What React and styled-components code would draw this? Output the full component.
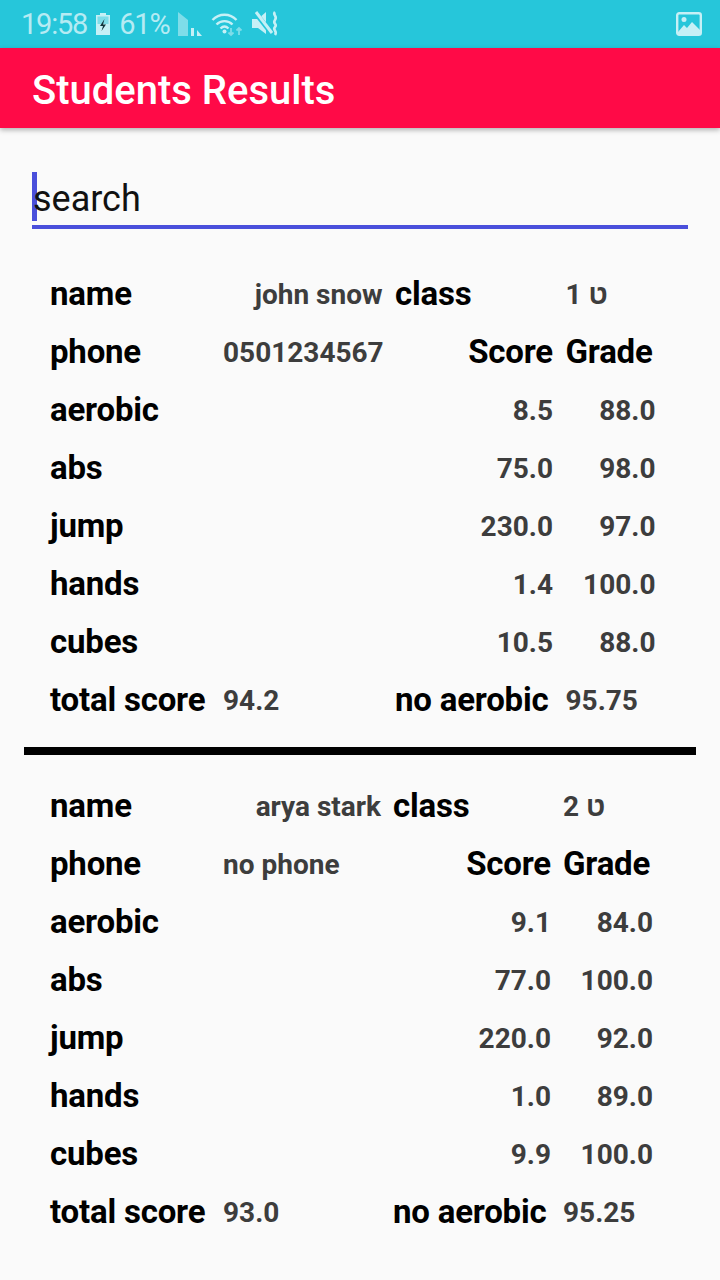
import React from 'react';
import styled, { createGlobalStyle } from 'styled-components';

const GlobalStyle = createGlobalStyle`
	html, body {
		margin: 0;
		padding: 0;
		background: #fafafa;
		font-family: Roboto, 'Liberation Sans', sans-serif;
	}
	* {
		box-sizing: border-box;
	}
`;

const STUDENTS = [
	{
		name: 'john snow',
		className: '1 ט',
		phone: '0501234567',
		total: '94.2',
		noAerobic: '95.75',
		columns: '160.5px 159.5px 158px 90px',
		columnGap: '12.5px',
		scores: [
			['aerobic', '8.5', '88.0'],
			['abs', '75.0', '98.0'],
			['jump', '230.0', '97.0'],
			['hands', '1.4', '100.0'],
			['cubes', '10.5', '88.0'],
		],
	},
	{
		name: 'arya stark',
		className: '2 ט',
		phone: 'no phone',
		total: '93.0',
		noAerobic: '95.25',
		columns: '161px 158px 158px 90px',
		columnGap: '12px',
		scores: [
			['aerobic', '9.1', '84.0'],
			['abs', '77.0', '100.0'],
			['jump', '220.0', '92.0'],
			['hands', '1.0', '89.0'],
			['cubes', '9.9', '100.0'],
		],
	},
];

const App = () => {
	return (
		<Screen>
			<GlobalStyle />
			<StatusBar>
				<StatusLeft>
					<StatusText>19:58</StatusText>
					<BatteryIcon />
					<StatusText>61%</StatusText>
					<SignalIcon />
					<WifiIcon />
					<MuteIcon />
				</StatusLeft>
				<PictureIcon />
			</StatusBar>
			<AppBar>Students Results</AppBar>
			<SearchField>
				<SearchInput placeholder='search' />
			</SearchField>
			{STUDENTS.map((student, index) => (
				<React.Fragment key={student.name}>
					{index > 0 && <Divider />}
					<ResultCard $columns={student.columns} $gap={student.columnGap}>
						<Label>name</Label>
						<Value $right>{student.name}</Value>
						<Label>class</Label>
						<Value>{student.className}</Value>

						<Label>phone</Label>
						<Value>{student.phone}</Value>
						<Label $right>Score</Label>
						<Label>Grade</Label>

						{student.scores.map(([title, score, grade]) => (
							<React.Fragment key={title}>
								<Label>{title}</Label>
								<span />
								<Value $right>{score}</Value>
								<Value $right>{grade}</Value>
							</React.Fragment>
						))}

						<Label>total score</Label>
						<Value>{student.total}</Value>
						<Label>no aerobic</Label>
						<Value>{student.noAerobic}</Value>
					</ResultCard>
				</React.Fragment>
			))}
		</Screen>
	);
};

const BatteryIcon = () => (
	<svg width='16' height='24' viewBox='0 0 16 24'>
		<path d='M5 1h6v2h4v20H1V3h4z' fill='#c6f0f6' />
		<path d='M2.5 4.5h11V12h-11z' fill='#7fdde9' />
		<path d='M9.5 7 5 14h3l-1.5 5L11 12.5H8z' fill='#12343c' />
	</svg>
);

const SignalIcon = () => (
	<svg width='26' height='26' viewBox='0 0 26 26'>
		<path d='M1 1l10 8v16H1z' fill='#7fdde9' />
		<path d='M14 17h3v8h-3z' fill='#c6f0f6' />
		<path d='M20 19l5 6h-5z' fill='#c6f0f6' />
	</svg>
);

const WifiIcon = () => (
	<svg width='32' height='26' viewBox='0 0 32 26'>
		<g fill='none' stroke='#c6f0f6' strokeWidth='2.4'>
			<path d='M1.5 9C8 2 19 2 25.5 9' />
			<path d='M5.5 13.5c4.500-4.500 11.500-4.500 16 0' />
			<path d='M9.500 17.500c2.500-2.500 5.500-2.500 8 0' />
		</g>
		<circle cx='13.500' cy='20.500' r='2' fill='#c6f0f6' />
		<path d='M20 17v7M17.500 21.500l2.500 2.500 2.500-2.500' fill='none' stroke='#7fdde9' strokeWidth='1.800' />
		<path d='M28 24v-7M25.500 19.500l2.500-2.500 2.500 2.500' fill='none' stroke='#7fdde9' strokeWidth='1.800' />
	</svg>
);

const MuteIcon = () => (
	<svg width='28' height='26' viewBox='0 0 28 26'>
		<path d='M1 8h6l8-7v22l-8-6H1z' fill='#c6f0f6' />
		<path d='M3 0 21 23' stroke='#26c6da' strokeWidth='5' />
		<path d='M5 1 21 22' stroke='#c6f0f6' strokeWidth='3' />
		<path d='M24 1c-3 3 3 4 0 8s3 4 0 7 3 4 0 8' fill='none' stroke='#c6f0f6' strokeWidth='2.600' />
	</svg>
);

const PictureIcon = () => (
	<svg width='26' height='24' viewBox='0 0 26 24'>
		<rect x='1.200' y='1.200' width='23.600' height='21.600' rx='2' fill='none' stroke='#c6f0f6' strokeWidth='2.400' />
		<circle cx='8' cy='7.500' r='2.500' fill='#c6f0f6' />
		<path d='M2 20l6-7 3 3 5-6 8 8v4H2z' fill='#c6f0f6' />
	</svg>
);

var Screen = styled.div`
	width: 720px;
	height: 1280px;
	overflow: hidden;
	background: #fafafa;
`;

var StatusBar = styled.div`
	height: 48px;
	background: #26c6da;
	padding: 0 18px 0 21px;
	display: flex;
	align-items: center;
	justify-content: space-between;
`;

var StatusLeft = styled.div`
	display: flex;
	align-items: center;
	gap: 8px;
`;

var StatusText = styled.span`
	font-size: 29px;
	letter-spacing: -1.2px;
	color: #b5ebf3;
	line-height: 50px;
`;

var AppBar = styled.header`
	position: relative;
	height: 80px;
	padding-left: 32px;
	background: #ff0a47;
	color: #fff;
	font-size: 40px;
	font-weight: 500;
	line-height: 85px;
	box-shadow: 0 2px 5px rgba(0, 0, 0, 0.3);
`;

var SearchField = styled.div`
	position: relative;
	margin: 44px 32px 0;
	height: 57px;
	border-bottom: 4px solid #4a4fdb;

	&::before {
		content: '';
		position: absolute;
		left: 0;
		top: 0;
		width: 5px;
		height: 49px;
		background: #4a4fdb;
	}
`;

var SearchInput = styled.input`
	position: relative;
	display: block;
	width: 100%;
	height: 53px;
	padding: 0 0 0 1px;
	border: 0;
	outline: 0;
	background: transparent;
	font-family: Roboto, sans-serif;
	font-size: 36px;

	&::placeholder {
		color: #111;
		opacity: 1;
	}
`;

var ResultCard = styled.section`
	display: grid;
	grid-template-columns: ${(props) => props.$columns};
	grid-auto-rows: 58px;
	column-gap: ${(props) => props.$gap};
	align-items: center;
	padding: 35px 0 0 50px;
	white-space: nowrap;
`;

var Label = styled.div`
	font-size: 33px;
	font-weight: 700;
	color: #000;
	letter-spacing: -0.2px;
	text-align: ${(props) => (props.$right ? 'right' : 'left')};
`;

var Value = styled.div`
	font-size: 28px;
	font-weight: 700;
	color: #3d3d3d;
	padding-top: 3px;
	text-align: ${(props) => (props.$right ? 'right' : 'left')};
`;

var Divider = styled.div`
	height: 8px;
	margin: 19px 24px -14px;
	background: #000;
`;

export default App;
